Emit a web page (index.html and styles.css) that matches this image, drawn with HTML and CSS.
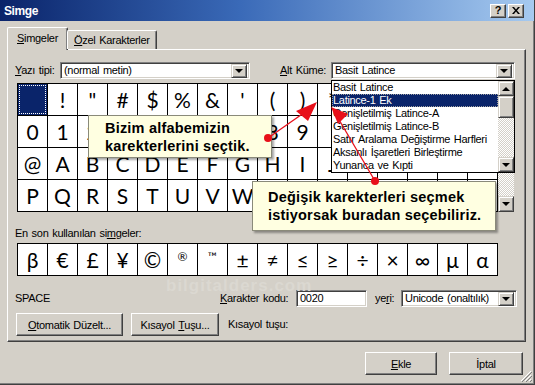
FILE: index.html
```html
<!DOCTYPE html>
<html lang="tr">
<head>
<meta charset="utf-8">
<title>Simge</title>
<link rel="stylesheet" href="styles.css">
</head>
<body>
<div class="window">
  <div class="titlebar">
    <span class="title">Simge</span>
    <div class="tbtns">
      <span class="tbtn help">?</span>
      <span class="tbtn close"><svg width="8" height="7" viewBox="0 0 8 7"><path d="M0 0h2l2 2.5L6 0h2L5 3.5 8 7H6L4 4.5 2 7H0l3-3.5z" fill="#000"/></svg></span>
    </div>
  </div>

  <div class="tabs">
    <div class="tab active"><u>S</u>imgeler</div>
    <div class="tab"><u>Ö</u>zel Karakterler</div>
  </div>

  <div class="panel">
    <div class="fontrow">
      <span class="lbl lbl-font"><u>Y</u>azı tipi:</span>
      <div class="combo combo-font"><span class="ctext">(normal metin)</span><span class="ddbtn"><i class="tri"></i></span></div>
      <span class="lbl lbl-subset"><u>A</u>lt Küme:</span>
      <div class="combo combo-subset"><span class="ctext">Basit Latince</span><span class="ddbtn"><i class="tri"></i></span></div>
    </div>

    <div class="charmap">
      <div class="grid chars">
        <div class="cell sel"></div><div class="cell">!</div><div class="cell">"</div><div class="cell">#</div><div class="cell">$</div><div class="cell">%</div><div class="cell">&amp;</div><div class="cell">'</div><div class="cell">(</div><div class="cell">)</div><div class="cell">*</div><div class="cell">+</div><div class="cell">,</div><div class="cell">-</div><div class="cell">.</div><div class="cell">/</div>
        <div class="cell">0</div><div class="cell">1</div><div class="cell">2</div><div class="cell">3</div><div class="cell">4</div><div class="cell">5</div><div class="cell">6</div><div class="cell">7</div><div class="cell">8</div><div class="cell">9</div><div class="cell">:</div><div class="cell">;</div><div class="cell">&lt;</div><div class="cell">=</div><div class="cell">&gt;</div><div class="cell">?</div>
        <div class="cell">@</div><div class="cell">A</div><div class="cell">B</div><div class="cell">C</div><div class="cell">D</div><div class="cell">E</div><div class="cell">F</div><div class="cell">G</div><div class="cell">H</div><div class="cell">I</div><div class="cell">J</div><div class="cell">K</div><div class="cell">L</div><div class="cell">M</div><div class="cell">N</div><div class="cell">O</div>
        <div class="cell">P</div><div class="cell">Q</div><div class="cell">R</div><div class="cell">S</div><div class="cell">T</div><div class="cell">U</div><div class="cell">V</div><div class="cell">W</div><div class="cell">X</div><div class="cell">Y</div><div class="cell">Z</div><div class="cell">[</div><div class="cell">\</div><div class="cell">]</div><div class="cell">^</div><div class="cell">_</div>
      </div>
      <div class="vscroll">
        <span class="sbtn"><i class="tri up"></i></span>
        <span class="thumb"></span>
        <span class="track"></span>
        <span class="sbtn"><i class="tri"></i></span>
      </div>
    </div>

    <div class="recent-label">En son kullanılan si<u>m</u>geler:</div>
    <div class="grid recent">
      <div class="cell">β</div><div class="cell">€</div><div class="cell">£</div><div class="cell">¥</div><div class="cell">©</div><div class="cell small">®</div><div class="cell small">™</div><div class="cell">±</div><div class="cell">≠</div><div class="cell">≤</div><div class="cell">≥</div><div class="cell">÷</div><div class="cell">×</div><div class="cell">∞</div><div class="cell">µ</div><div class="cell">α</div>
    </div>

    <div class="coderow">
      <span class="lbl lbl-space">SPACE</span>
      <span class="lbl lbl-code"><u>K</u>arakter kodu:</span>
      <div class="field field-code">0020</div>
      <span class="lbl lbl-from">ye<u>r</u>i:</span>
      <div class="combo combo-from"><span class="ctext">Unicode (onaltılık)</span><span class="ddbtn"><i class="tri"></i></span></div>
    </div>

    <div class="btnrow">
      <span class="btn btn-auto"><span><u>O</u>tomatik Düzelt...</span></span>
      <span class="btn btn-short"><span>Kısayol&nbsp;<u>T</u>uşu...</span></span>
      <span class="lbl lbl-shortcut">Kısayol tuşu:</span>
    </div>
  </div>

  <div class="footer">
    <span class="btn btn-ok"><span><u>E</u>kle</span></span>
    <span class="btn btn-cancel"><span>İptal</span></span>
  </div>

  <!-- overlays -->
  <div class="watermark">bilgitalders.com</div>

  <div class="listbox">
    <ul class="items">
      <li>Basit Latince</li>
      <li class="hl">Latince-1 Ek</li>
      <li>Genişletilmiş Latince-A</li>
      <li>Genişletilmiş Latince-B</li>
      <li>Satır Aralama Değiştirme Harfleri</li>
      <li>Aksanlı İşaretleri Birleştirme</li>
      <li>Yunanca ve Kıpti</li>
    </ul>
    <div class="vscroll lscroll">
      <span class="sbtn"><i class="tri up"></i></span>
      <span class="thumb"></span>
      <span class="track"></span>
      <span class="sbtn"><i class="tri"></i></span>
    </div>
  </div>

  <div class="callout callout-1">Bizim alfabemizin<br>karekterlerini seçtik.</div>
  <div class="callout callout-2">Değişik karekterleri seçmek<br>istiyorsak buradan seçebiliriz.</div>

  <svg class="arrows" width="535" height="385" viewBox="0 0 535 385">
    <g fill="#e8101a" stroke="#e8101a">
      <line x1="268" y1="138" x2="308" y2="110" stroke-width="1.3"/>
      <polygon points="317,102 296,111 308,121" stroke="none"/>
      <circle cx="268" cy="138" r="4" stroke="none"/>
      <line x1="375" y1="181" x2="338" y2="118" stroke-width="1.3"/>
      <polygon points="331,107 348,114 338,124" stroke="none"/>
      <circle cx="375" cy="181" r="4" stroke="none"/>
    </g>
  </svg>

  <svg class="grip" width="12" height="12" viewBox="0 0 12 12">
    <path d="M11 1L1 11M11 5L5 11M11 9L9 11" stroke="#fff" stroke-width="1"/>
    <path d="M12 2L2 12M12 6L6 12M12 10L10 12" stroke="#808080" stroke-width="1"/>
  </svg>
</div>
</body>
</html>
```

FILE: styles.css
```css
* { box-sizing: border-box; }
html, body { margin: 0; padding: 0; }
body {
  width: 535px;
  height: 385px;
  overflow: hidden;
  background: #d4d0c8;
  font-family: "Liberation Sans", Arial, sans-serif;
  font-size: 11px;
  letter-spacing: -0.3px;
  word-spacing: 1px;
  color: #000;
}
u { text-decoration: underline; text-underline-offset: 1px; }

.window {
  position: relative;
  width: 535px;
  height: 385px;
  background: #d4d0c8;
  border-right: 1px solid #404040;
  border-bottom: 1px solid #404040;
  box-shadow: inset -1px -1px 0 #808080;
  display: flex;
  flex-direction: column;
}

/* Title bar */
.titlebar {
  height: 21px;
  flex: none;
  display: flex;
  align-items: center;
  justify-content: space-between;
  padding: 0 10px 0 4px;
  background: linear-gradient(90deg, #0a246a 0%, #3a6ab8 45%, #a6caf0 100%);
}
.title {
  color: #fff;
  font-weight: bold;
  font-size: 12px;
  letter-spacing: -0.4px;
}
.tbtns { display: flex; gap: 2px; }
.tbtn {
  width: 16px;
  height: 14px;
  background: #d4d0c8;
  border-top: 1px solid #fff;
  border-left: 1px solid #fff;
  border-right: 1px solid #404040;
  border-bottom: 1px solid #404040;
  box-shadow: inset -1px -1px 0 #808080;
  display: flex;
  align-items: center;
  justify-content: center;
  font-weight: bold;
  font-size: 11px;
  line-height: 1;
  letter-spacing: 0;
}
.tbtn.help { padding-bottom: 1px; }

/* Tabs */
.tabs {
  flex: none;
  display: flex;
  align-items: flex-end;
  margin: 6px 0 0 7px;
  height: 22px;
  position: relative;
  z-index: 2;
}
.tab {
  height: 19px;
  padding: 2px 6px 0 6px;
  border-top: 1px solid #fff;
  border-left: 1px solid #fff;
  border-right: 1px solid #404040;
  box-shadow: inset -1px 0 0 #808080;
  border-radius: 2px 2px 0 0;
  background: #d4d0c8;
  line-height: 15px;
}
.tab.active {
  height: 23px;
  padding: 3px 9px 0 9px;
  margin-bottom: -1px;
  margin-right: -1px;
}

/* Panel */
.panel {
  flex: none;
  margin: 0 8px 0 7px;
  height: 293px;
  border-top: 1px solid #fff;
  border-left: 1px solid #fff;
  border-right: 1px solid #404040;
  border-bottom: 1px solid #404040;
  box-shadow: inset -1px -1px 0 #808080;
  padding: 12px 0 0 7px;
  display: flex;
  flex-direction: column;
}

.lbl { white-space: nowrap; line-height: 13px; }

.fontrow {
  display: flex;
  align-items: center;
  height: 17px;
}
.lbl-font { width: 45px; }
.lbl-subset { width: 51px; margin-left: 30px; }

.combo {
  height: 17px;
  background: #fff;
  border-top: 1px solid #808080;
  border-left: 1px solid #808080;
  border-right: 1px solid #fff;
  border-bottom: 1px solid #fff;
  box-shadow: inset 1px 1px 0 #404040, inset -1px -1px 0 #d4d0c8;
  display: flex;
  align-items: center;
  padding: 0 2px 0 3px;
}
.ctext { flex: 1; line-height: 13px; white-space: nowrap; overflow: hidden; }
.combo-font { width: 190px; }
.combo-subset { width: 184px; }

.ddbtn, .sbtn {
  width: 16px;
  height: 14px;
  flex: none;
  background: #d4d0c8;
  border-top: 1px solid #d4d0c8;
  border-left: 1px solid #d4d0c8;
  border-right: 1px solid #404040;
  border-bottom: 1px solid #404040;
  box-shadow: inset 1px 1px 0 #fff, inset -1px -1px 0 #808080;
  display: flex;
  align-items: center;
  justify-content: center;
}
.tri {
  display: block;
  width: 0;
  height: 0;
  border-left: 4px solid transparent;
  border-right: 4px solid transparent;
  border-top: 4px solid #000;
}
.tri.up { border-top: 0; border-bottom: 4px solid #000; }

/* Character map */
.charmap {
  display: flex;
  margin: 4px 0 0 2px;
  height: 129px;
}
.grid {
  display: grid;
  grid-template-columns: repeat(16, 29px);
  gap: 1px;
  padding: 1px;
  background: #000;
  width: 481px;
}
.chars { grid-template-rows: repeat(4, 31px); }
.cell {
  background: #fff;
  display: flex;
  align-items: center;
  justify-content: center;
  font-family: "Lato", "Open Sans", sans-serif;
  font-size: 21px;
  letter-spacing: 0;
  line-height: 1;
}
.cell.sel {
  background: #0a246a;
  outline: 1px dotted #fff;
  outline-offset: -2px;
}
.cell.small { font-size: 12px; align-items: flex-start; padding-top: 7px; }

.vscroll {
  width: 16px;
  display: flex;
  flex-direction: column;
  background: repeating-conic-gradient(#fff 0 25%, #d4d0c8 0 50%) 0 0 / 2px 2px;
}
.vscroll .sbtn { height: 16px; }
.vscroll .thumb {
  height: 22px;
  background: #d4d0c8;
  border-top: 1px solid #d4d0c8;
  border-left: 1px solid #d4d0c8;
  border-right: 1px solid #404040;
  border-bottom: 1px solid #404040;
  box-shadow: inset 1px 1px 0 #fff, inset -1px -1px 0 #808080;
}
.vscroll .track { flex: 1; }

.recent-label {
  margin-top: 15px;
  line-height: 13px;
}
.recent {
  margin: 3px 0 0 2px;
  grid-template-rows: 31px;
}

/* Code row */
.coderow {
  display: flex;
  align-items: center;
  height: 17px;
  margin-top: 14px;
}
.lbl-space { width: 205px; }
.lbl-code { width: 76px; }
.field {
  height: 17px;
  background: #fff;
  border-top: 1px solid #808080;
  border-left: 1px solid #808080;
  border-right: 1px solid #fff;
  border-bottom: 1px solid #fff;
  box-shadow: inset 1px 1px 0 #404040, inset -1px -1px 0 #d4d0c8;
  padding: 0 3px;
  line-height: 15px;
}
.field-code { width: 71px; }
.lbl-from { margin-left: 8px; width: 26px; }
.combo-from { width: 116px; }

/* Buttons */
.btnrow {
  display: flex;
  align-items: center;
  margin-top: 6px;
  height: 23px;
}
.btn {
  height: 23px;
  display: flex;
  align-items: center;
  justify-content: center;
  background: #d4d0c8;
  border-top: 1px solid #fff;
  border-left: 1px solid #fff;
  border-right: 1px solid #404040;
  border-bottom: 1px solid #404040;
  box-shadow: inset -1px -1px 0 #808080;
  white-space: nowrap;
}
.btn-auto { width: 107px; margin-left: 1px; }
.btn-short { width: 88px; margin-left: 8px; }
.lbl-shortcut { margin-left: 9px; }

.footer {
  display: flex;
  justify-content: flex-end;
  gap: 12px;
  margin-top: 10px;
  padding-right: 11px;
}
.btn-ok { width: 72px; }
.btn-cancel { width: 74px; }

/* Overlays */
.watermark {
  position: absolute;
  left: 166px;
  top: 276px;
  font-family: "Liberation Sans", Arial, sans-serif;
  font-weight: bold;
  font-size: 17px;
  letter-spacing: 1px;
  color: #dbd8d1;
}

.listbox {
  position: absolute;
  left: 331px;
  top: 80px;
  width: 184px;
  height: 93px;
  background: #fff;
  border: 1px solid #000;
  display: flex;
  z-index: 3;
}
.items {
  list-style: none;
  margin: 0;
  padding: 0;
  flex: 1;
  overflow: hidden;
}
.items li {
  height: 13px;
  line-height: 13px;
  padding-left: 1px;
  white-space: nowrap;
}
.items li.hl {
  background: #0a246a;
  color: #fff;
  outline: 1px dotted #a0a0a0;
  outline-offset: -1px;
}
.lscroll { width: 16px; }
.lscroll .sbtn { height: 15px; }

.callout {
  position: absolute;
  background: #ffffe1;
  border: 1px solid #8a8a7a;
  box-shadow: 2px 2px 2px rgba(0, 0, 0, 0.35);
  font-family: "Liberation Sans", Arial, sans-serif;
  font-weight: bold;
  font-size: 14.5px;
  letter-spacing: 0.2px;
  word-spacing: 0;
  line-height: 18px;
  color: #000;
  z-index: 4;
}
.callout-1 {
  left: 88px;
  top: 115px;
  width: 184px;
  height: 43px;
  padding: 3px 0 0 16px;
}
.callout-2 {
  left: 252px;
  top: 181px;
  width: 244px;
  height: 50px;
  padding: 6px 0 0 15px;
}

.arrows {
  position: absolute;
  left: 0;
  top: 0;
  z-index: 5;
  pointer-events: none;
}
.grip {
  position: absolute;
  right: 2px;
  bottom: 2px;
}
```
